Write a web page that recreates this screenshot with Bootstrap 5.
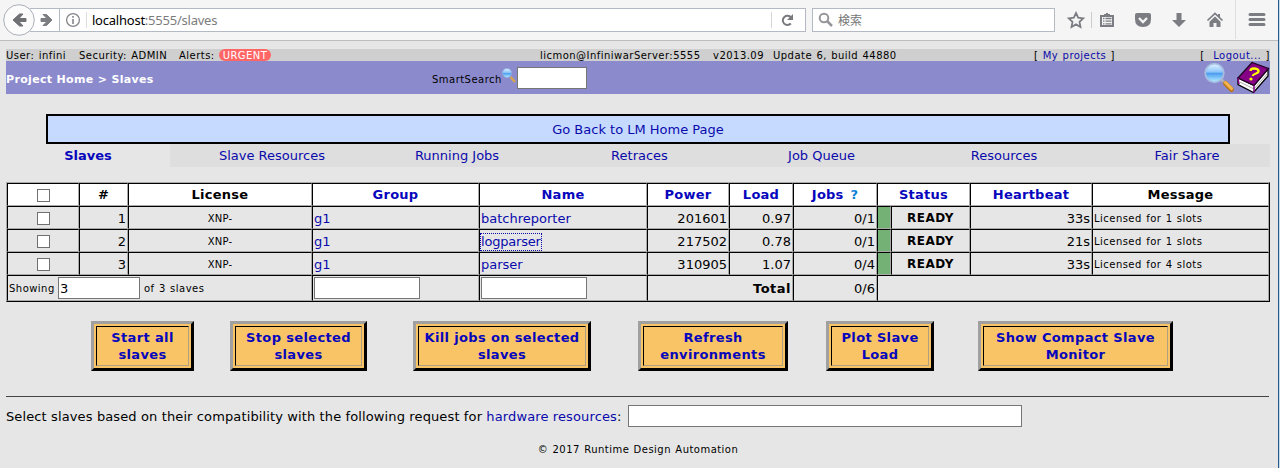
<!DOCTYPE html>
<html lang="en">
<head>
<meta charset="utf-8">
<title>Slaves</title>
<link href="https://cdn.jsdelivr.net/npm/bootstrap@5.3.0/dist/css/bootstrap.min.css" rel="stylesheet">
<style>
body{width:1280px;height:468px;overflow:hidden;background:#e6e6e6;color:#000;font:13px/17px "DejaVu Sans",sans-serif}
a{color:#0a0aac;text-decoration:none}
.toolbar{height:41px;background:#f6f5f6;border-bottom:1px solid #bdbdbf}
.toolbar svg,.banner svg{display:block;flex:none}
.urlbar{width:776px;height:24px;margin-left:30px;background:#fff;border:1px solid #b3bac4;border-left:0;font:13px/22px "Noto Sans",sans-serif;letter-spacing:-.23px;color:#7c7c7c}
.findbar{width:243px;height:24px;margin:0 1px 0 6px;background:#fff;border:1px solid #b3bac4;font:12px/20px "Noto Sans CJK JP",sans-serif;color:#777}
.backbtn{left:3px;top:4px}
.vline{width:1px;height:16px;background:#d5d5d8;flex:none}
.edge{right:0;top:0;width:2px;height:468px;background:#c4dcec;border-left:1px solid #275a88}
.page{width:1264px;margin:8px 0 0 6px}
.infobar,.smart,.foot,.grid .tiny{letter-spacing:.47px;word-spacing:.7px}
.infobar{grid-template-columns:534px 494px 164px auto;height:12px;background:#cfcfcf;font-size:10px;line-height:13px;white-space:pre}
.urgent{background:#ff6666;color:#fff;height:12px;width:52px;border-radius:6px;text-align:center;margin-left:5px}
.banner{height:33px;background:#8b8acd}
.crumb{width:426px;color:#fff;font-weight:700;font-size:11px;letter-spacing:.33px;white-space:pre;padding-top:3px}
.smart{font-size:10px;width:70px;padding-top:4px}
.field{display:block;background:#fff;border:1px solid #767676;border-radius:0;height:22px;padding:0 1px;font:13px/20px "DejaVu Sans",sans-serif;color:#000;outline:0}
.goback{width:1184px;height:30px;margin:20px 0 0 40px;border:2px solid #000;background:#c6daff;line-height:27px}
.tabs{grid-template-columns:164px 204px 166px 199px 165px 200px 166px;height:22px;line-height:23px}
.tabs a+a{background:#dedede}
.tabs a.fw-bold,.grid th a,.action{color:#0606bc}
.grid{table-layout:fixed;border-collapse:separate;border-spacing:0;width:1264px;margin-top:16px;border:1px solid;border-color:#a9a9a9 #000 #000 #a9a9a9}
.grid td,.grid th{height:23px;padding:0 1px;border:1px solid;border-color:#000 #a9a9a9 #a9a9a9 #000;white-space:nowrap;line-height:20px;vertical-align:middle}
.grid td{line-height:19px;padding-top:2px}
.grid th{background:#fff;text-align:center;padding-top:1px;letter-spacing:.25px}
.grid tfoot td{height:26px;padding-top:0}
.grid tfoot .fw-bold{letter-spacing:.5px}
.grid .tiny{font-size:10px}
.grid .lic{font-size:10px;text-align:center;letter-spacing:.2px}
.grid .stat{font-size:12px;font-weight:700;text-align:center;letter-spacing:.5px}
.grid .go{background:#74b174}
.tick{display:block;width:13px;height:13px;border:1px solid #707070;background:#fff;margin:0 auto;appearance:none;border-radius:0}
.grid td .tick{margin-bottom:1px}
.focused{display:inline-block;outline:1px dotted #0a0aa8;line-height:16px;letter-spacing:-.2px}
.actions{margin-top:19px;height:50px;padding-left:85px}
.action{height:50px;border:3px solid;border-color:#a0a0a0 #000 #000 #a0a0a0;background:#f8c465;padding:2px;font-weight:700;line-height:17px;letter-spacing:.36px;text-align:center;flex:none}
.action span{display:block;height:40px;border:1px solid;border-color:#000 #b0a080 #b0a080 #000;padding-top:2px;white-space:nowrap}
.rule{height:1px;background:#444;margin-top:25px;width:1263px}
.request{margin-top:8px;height:22px;line-height:23px;white-space:pre;letter-spacing:.122px}
.foot{font-size:10px;line-height:14px;margin-top:16px}
</style>
</head>
<body>
<div class="toolbar position-relative d-flex align-items-center">
  <div class="urlbar d-flex align-items-center">
    <svg width="62" height="22" viewBox="30 9 62 22"><path d="M41 18.500h6l-4-4h3.500l5.500 5.500-5.500 5.500h-3.500l4-4h-6z" fill="#7d7e82" stroke="#7d7e82"/><path d="M59.500 9v22" stroke="#b3bac4"/><circle cx="73" cy="20" r="6.400" fill="none" stroke="#858589" stroke-width="1.300"/><path d="M73 19v5M73 16v1.800" stroke="#858589" stroke-width="1.600"/><path d="M86.500 12v16" stroke="#ddd"/></svg>
    <span class="flex-grow-1"><span class="text-black">localhost</span>:5555/slaves</span>
    <i class="vline"></i>
    <svg width="33" height="22" viewBox="773 9 33 22"><path d="M791.800 23.500a4.600 4.600 0 1 1 .2-6" fill="none" stroke="#7a7a7e" stroke-width="2"/><path d="M794 14v6h-6z" fill="#7a7a7e"/></svg>
  </div>
  <svg class="backbtn position-absolute" width="32" height="32" viewBox="3 4 32 32"><circle cx="19" cy="20" r="15.300" fill="#fbfbfb" stroke="#a9adb5"/><path d="M26 18.500h-7l4-4.500h-3.500l-6.500 6 6.500 6h3.500l-4-4.500h7z" fill="#6f7074" stroke="#6f7074"/></svg>
  <div class="findbar d-flex align-items-center">
    <svg width="25" height="22" viewBox="813 9 25 22"><circle cx="824" cy="18" r="4.300" fill="none" stroke="#96969a" stroke-width="2"/><path d="m827 21 5 5" stroke="#96969a" stroke-width="2.500"/></svg>
    <span>検索</span>
  </div>
  <svg width="223" height="40" viewBox="1056 0 223 40" fill="#7b7d83"><path d="m1076 13 2.200 4.700 5 .6-3.700 3.500 1 5.200-4.500-2.600-4.500 2.600 1-5.200-3.700-3.500 5-.6z" fill="none" stroke="#7b7d83" stroke-width="1.800"/><path d="M1091.500 12v16" stroke="#ccc"/><path fill-rule="evenodd" d="M1100 15h4v-1h2v-1h2v1h2v1h4v12h-14zM1102 17v8h10v-8z"/><path d="M1103 18.500h1.500m1 0h6m-8.500 2.700h1.500m1 0h6m-8.500 2.700h1.500m1 0h6" stroke="#7b7d83" stroke-width="1.300"/><path d="M1135 15q0-2 2-2h12q2 0 2 2v4q0 8-8 8t-8-8z"/><path d="m1139 18 4 4 4-4" fill="none" stroke="#f6f5f6" stroke-width="2.300"/><path d="M1176.500 13h5v7h4.500l-7 7-7-7h4.500z"/><path d="m1207.500 20.500 7.500-7 7.500 7" fill="none" stroke="#7b7d83" stroke-width="1.700"/><path d="M1218 14h2v3h-2zM1215 16.500l5.500 5.200V27h-4v-4h-3v4h-4v-5.300z"/><path d="M1235.500 0v39" stroke="#dedee0"/><path d="M1250 14.500h14m-14 5h14m-14 5h14" stroke="#7b7d83" stroke-width="3" stroke-linecap="round"/></svg>
</div>
<div class="edge position-absolute"></div>

<main class="page">
  <div class="infobar d-grid">
    <div class="d-flex"><span style="width:73px">User: infini</span><span style="width:100px">Security: ADMIN</span><span style="width:35px">Alerts:</span><span class="urgent">URGENT</span></div>
    <div class="d-flex"><span style="width:173px">licmon@InfiniwarServer:5555</span><span style="width:60px">v2013.09</span><span>Update 6, build 44880</span></div>
    <div>[ <a href="#">My projects</a> ]</div>
    <div class="text-end">[  <a href="#">Logout...</a> ]</div>
  </div>
  <div class="banner d-flex align-items-center">
    <div class="crumb">Project Home &gt; Slaves</div>
    <div class="smart">SmartSearch</div>
    <svg width="15" height="33" viewBox="502 61 15 33"><path d="m510.500 77 4.500 5" stroke="#d9a54c" stroke-width="2.500"/><circle cx="507" cy="73" r="4.700" fill="url(#lens)" stroke="#8fa5dc"/></svg>
    <input class="field" style="width:70px" aria-label="SmartSearch">
    <svg class="ms-auto" width="68" height="33" viewBox="1202 61 68 33">
      <defs><linearGradient id="lens" x1="0" y1="0" x2="0" y2="1"><stop offset="0" stop-color="#e4f3ff"/><stop offset=".45" stop-color="#8cc4fa"/><stop offset=".52" stop-color="#4c9df0"/><stop offset="1" stop-color="#b8f0ff"/></linearGradient></defs>
      <path d="m1221.500 79.500 4 4" stroke="#b0b0bb" stroke-width="3"/><path d="m1225.500 83.500 6 6" stroke="#b97820" stroke-width="5" stroke-linecap="round"/><path d="m1225.500 82.500 6 6" stroke="#f6b64d" stroke-width="3" stroke-linecap="round"/>
      <circle cx="1214.500" cy="73" r="9.300" fill="url(#lens)" stroke="#a6bde0" stroke-width="1.800"/>
      <path d="m1238 78 16 7.500 14-16.500v7l-14.500 16.500-15.500-8z" fill="#fff" stroke="#000" stroke-width="1.300"/><path d="m1240 82 14 7 13-15" fill="none" stroke="#aaa"/>
      <path d="m1238 78 14-15.500 16.500 6-14.500 17z" fill="#850085" stroke="#200020" stroke-width="1.200"/><path d="m1238 78 1 6m15 1.500v7" stroke="#850085" stroke-width="1.500"/>
      <path d="M1250.500 71q0-2.500 3.500-2.500t4.500 2q.5 2-2.500 3t-3.500 2.500" fill="none" stroke="#ff0" stroke-width="2.300"/><circle cx="1251" cy="79" r="1.600" fill="#ff0"/>
    </svg>
  </div>
  <div class="goback text-center"><a href="#">Go Back to LM Home Page</a></div>
  <nav class="tabs d-grid text-center"><a href="#" class="fw-bold">Slaves</a><a href="#">Slave Resources</a><a href="#">Running Jobs</a><a href="#">Retraces</a><a href="#">Job Queue</a><a href="#">Resources</a><a href="#">Fair Share</a></nav>

  <table class="grid">
    <colgroup><col style="width:72px"><col style="width:49px"><col style="width:184px"><col style="width:167px"><col style="width:168px"><col style="width:82px"><col style="width:64px"><col style="width:84px"><col style="width:14px"><col style="width:79px"><col style="width:122px"><col style="width:177px"></colgroup>
    <thead><tr><th><input type="checkbox" class="tick" aria-label="All"></th><th>#</th><th>License</th><th><a href="#">Group</a></th><th><a href="#">Name</a></th><th><a href="#">Power</a></th><th><a href="#">Load</a></th><th><a href="#" style="word-spacing:2px">Jobs <span style="color:#0a80d8">?</span></a></th><th colspan="2"><a href="#">Status</a></th><th><a href="#">Heartbeat</a></th><th>Message</th></tr></thead>
    <tbody>
    <tr><td><input type="checkbox" class="tick" aria-label="1"></td><td class="text-end">1</td><td class="lic">XNP-</td><td><a href="#">g1</a></td><td><a href="#">batchreporter</a></td><td class="text-end">201601</td><td class="text-end">0.97</td><td class="text-end">0/1</td><td class="go"></td><td class="stat">READY</td><td class="text-end">33s</td><td class="tiny">Licensed for 1 slots</td></tr>
    <tr><td><input type="checkbox" class="tick" aria-label="2"></td><td class="text-end">2</td><td class="lic">XNP-</td><td><a href="#">g1</a></td><td><a href="#" class="focused">logparser</a></td><td class="text-end">217502</td><td class="text-end">0.78</td><td class="text-end">0/1</td><td class="go"></td><td class="stat">READY</td><td class="text-end">21s</td><td class="tiny">Licensed for 1 slots</td></tr>
    <tr><td><input type="checkbox" class="tick" aria-label="3"></td><td class="text-end">3</td><td class="lic">XNP-</td><td><a href="#">g1</a></td><td><a href="#">parser</a></td><td class="text-end">310905</td><td class="text-end">1.07</td><td class="text-end">0/4</td><td class="go"></td><td class="stat">READY</td><td class="text-end">33s</td><td class="tiny">Licensed for 4 slots</td></tr>
    </tbody>
    <tfoot><tr><td colspan="3" class="tiny"><div class="d-flex align-items-center"><span style="width:49px">Showing</span><input class="field" style="width:82px" value="3" aria-label="Rows"><span class="ms-1">of 3 slaves</span></div></td><td><input class="field" style="width:106px" aria-label="Group"></td><td><input class="field" style="width:106px" aria-label="Name"></td><td colspan="2" class="text-end fw-bold">Total</td><td class="text-end">0/6</td><td colspan="4"></td></tr></tfoot>
  </table>

  <div class="actions d-flex">
    <a href="#" class="action" style="width:103px"><span>Start all<br>slaves</span></a>
    <a href="#" class="action" style="width:137px;margin-left:36px"><span>Stop selected<br>slaves</span></a>
    <a href="#" class="action" style="width:178px;margin-left:46px"><span>Kill jobs on selected<br>slaves</span></a>
    <a href="#" class="action" style="width:150px;margin-left:47px"><span>Refresh<br>environments</span></a>
    <a href="#" class="action" style="width:108px;margin-left:38px"><span>Plot Slave<br>Load</span></a>
    <a href="#" class="action" style="width:195px;margin-left:44px"><span>Show Compact Slave<br>Monitor</span></a>
  </div>
  <div class="rule"></div>
  <div class="request d-flex"><label style="width:622px">Select slaves based on their compatibility with the following request for <a href="#">hardware resources</a>:</label><input class="field" style="width:394px" aria-label="Request"></div>
  <div class="foot text-center">© 2017 Runtime Design Automation</div>
</main>
<script src="https://cdn.jsdelivr.net/npm/bootstrap@5.3.0/dist/js/bootstrap.bundle.min.js"></script>
</body>
</html>
